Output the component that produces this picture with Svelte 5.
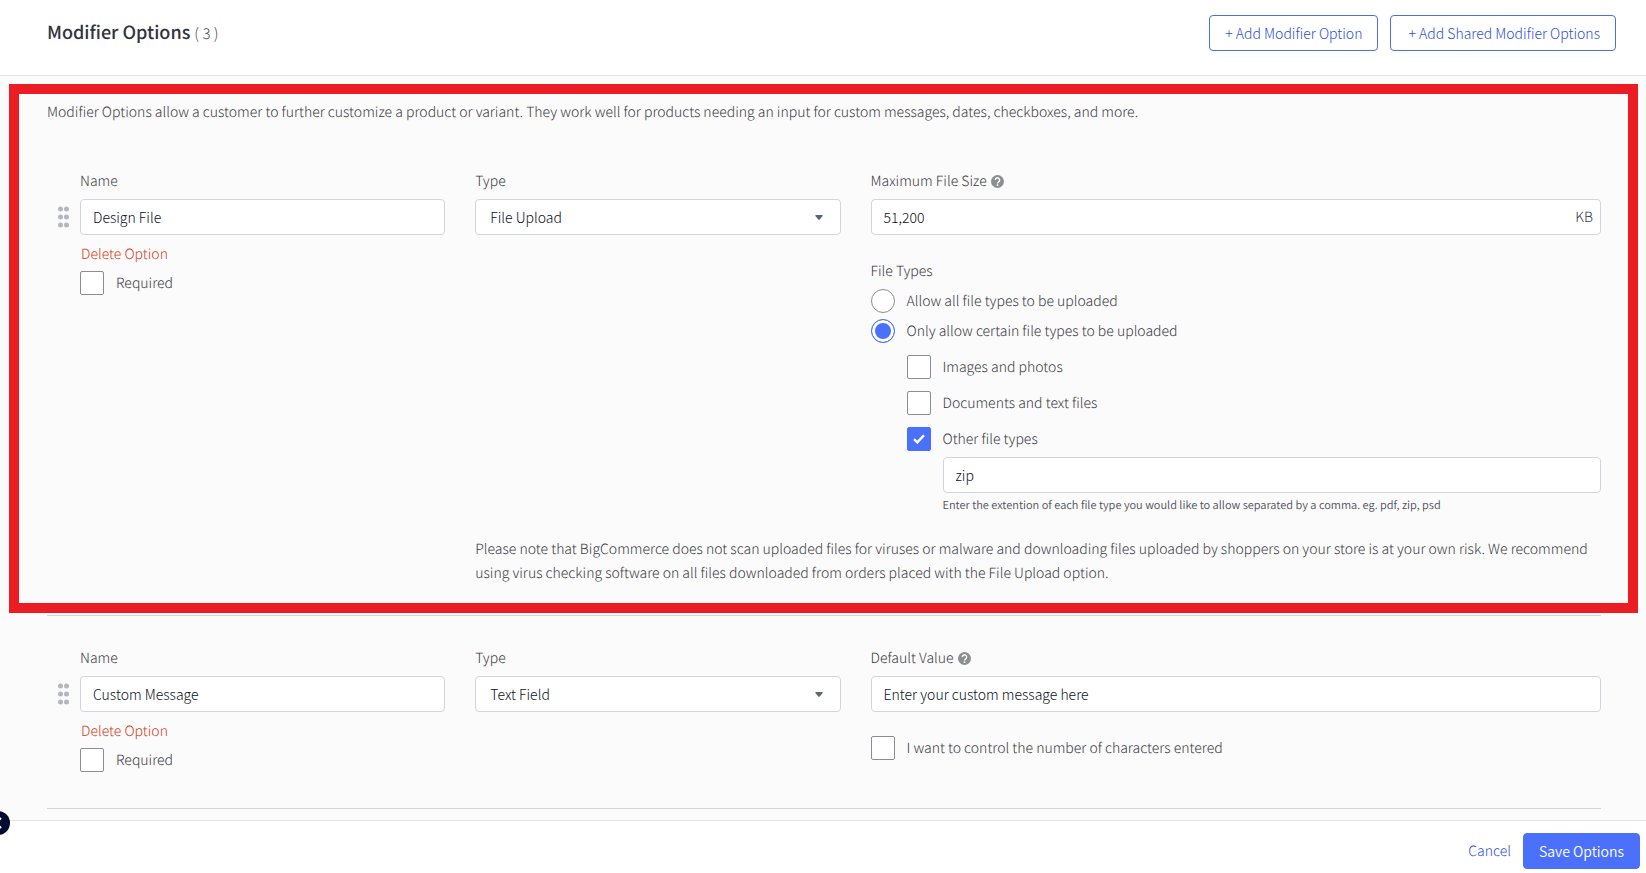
<script lang="ts">
    let count = 3;

    let uploadName = 'Design File';
    let uploadType = 'File Upload';
    let uploadRequired = false;
    let maxSize = '51,200';
    let allow = 'certain';
    let images = false;
    let documents = false;
    let other = true;
    let extensions = 'zip';

    let textName = 'Custom Message';
    let textType = 'Text Field';
    let textRequired = false;
    let defaultValue = 'Enter your custom message here';
    let limitCharacters = false;

    const types = ['File Upload', 'Text Field', 'Date Field', 'Checkbox'];
    const dots = [3, 11, 19];
</script>

{#snippet handle()}
    <button type="button" class="handle" aria-label="Reorder option">
        <svg width="11" height="22" viewBox="0 0 11 22" fill="#b4b7c1">
            {#each dots as y}
                <circle cx="2.5" cy={y} r="2.5" />
                <circle cx="8.5" cy={y} r="2.5" />
            {/each}
        </svg>
    </button>
{/snippet}

{#snippet help()}
    <svg class="help" width="13" height="13" viewBox="0 0 24 24" aria-hidden="true">
        <circle cx="12" cy="12" r="12" fill="#8c8f8f" />
        <path
            d="M8 9.200a4 4 0 1 1 6.400 3.200c-1.500 1.100-2.400 1.700-2.400 3.400"
            fill="none"
            stroke="#fff"
            stroke-width="2.600"
        />
        <rect x="10.500" y="17.300" width="3" height="3" fill="#fff" />
    </svg>
{/snippet}

{#snippet caret()}
    <svg class="caret" width="8" height="5" viewBox="0 0 8 5" fill="#5e637a" aria-hidden="true">
        <path d="M1 0h6q1.200 0 .6 1L4.700 4.600q-.7.700-1.400 0L.4 1Q-.2 0 1 0z" />
    </svg>
{/snippet}

<div class="page">
    <header>
        <h1>Modifier Options <span>( {count} )</span></h1>
        <div class="actions">
            <button type="button" class="button">+ Add Modifier Option</button>
            <button type="button" class="button shared">+ Add Shared Modifier Options</button>
        </div>
    </header>

    <main>
        <div class="highlighted">
            <p class="intro">
                Modifier Options allow a customer to further customize a product or variant. They
                work well for products needing an input for custom messages, dates, checkboxes, and
                more.
            </p>

            <section class="option">
                {@render handle()}
                <div class="fields">
                    <div class="field">
                        <label for="upload-name">Name</label>
                        <input type="text" id="upload-name" bind:value={uploadName} />
                        <a class="delete" href="#delete-upload">Delete Option</a>
                        <label class="check">
                            <input type="checkbox" bind:checked={uploadRequired} />
                            Required
                        </label>
                    </div>
                    <div class="field">
                        <label for="upload-type">Type</label>
                        <div class="select">
                            <select id="upload-type" bind:value={uploadType}>
                                {#each types as type}
                                    <option>{type}</option>
                                {/each}
                            </select>
                            {@render caret()}
                        </div>
                    </div>
                    <div class="field">
                        <label for="max-size">Maximum File Size {@render help()}</label>
                        <div class="suffixed">
                            <input type="text" id="max-size" bind:value={maxSize} />
                            <span>KB</span>
                        </div>

                        <fieldset>
                            <legend>File Types</legend>
                            <label class="check">
                                <input type="radio" name="allow" value="all" bind:group={allow} />
                                Allow all file types to be uploaded
                            </label>
                            <label class="check">
                                <input
                                    type="radio"
                                    name="allow"
                                    value="certain"
                                    bind:group={allow}
                                />
                                Only allow certain file types to be uploaded
                            </label>
                        </fieldset>

                        <div class="kinds">
                            <label class="check">
                                <input type="checkbox" bind:checked={images} />
                                Images and photos
                            </label>
                            <label class="check">
                                <input type="checkbox" bind:checked={documents} />
                                Documents and text files
                            </label>
                            <label class="check">
                                <span class="tick">
                                    <input type="checkbox" bind:checked={other} />
                                    {#if other}
                                        <svg width="12" height="10" viewBox="0 0 12 10" aria-hidden="true">
                                            <path
                                                d="M1 5.200l3.300 3.200L11 1.200"
                                                fill="none"
                                                stroke="#fff"
                                                stroke-width="2.400"
                                            />
                                        </svg>
                                    {/if}
                                </span>
                                Other file types
                            </label>
                        </div>
                        <div class="extensions">
                            <input
                                type="text"
                                aria-label="File extensions"
                                aria-describedby="extensions-hint"
                                bind:value={extensions}
                            />
                            <small id="extensions-hint">
                                Enter the extention of each file type you would like to allow
                                separated by a comma. eg. pdf, zip, psd
                            </small>
                        </div>
                    </div>
                    <p class="note">
                        Please note that BigCommerce does not scan uploaded files for viruses or
                        malware and downloading files uploaded by shoppers on your store is at your
                        own risk. We recommend using virus checking software on all files downloaded
                        from orders placed with the File Upload option.
                    </p>
                </div>
            </section>
        </div>

        <section class="option">
            {@render handle()}
            <div class="fields">
                <div class="field last">
                    <label for="text-name">Name</label>
                    <input type="text" id="text-name" bind:value={textName} />
                    <a class="delete" href="#delete-text">Delete Option</a>
                    <label class="check">
                        <input type="checkbox" bind:checked={textRequired} />
                        Required
                    </label>
                </div>
                <div class="field">
                    <label for="text-type">Type</label>
                    <div class="select">
                        <select id="text-type" bind:value={textType}>
                            {#each types as type}
                                <option>{type}</option>
                            {/each}
                        </select>
                        {@render caret()}
                    </div>
                </div>
                <div class="field">
                    <label for="default-value">Default Value {@render help()}</label>
                    <input type="text" id="default-value" bind:value={defaultValue} />
                    <label class="check limit">
                        <input type="checkbox" bind:checked={limitCharacters} />
                        I want to control the number of characters entered
                    </label>
                </div>
            </div>
        </section>
    </main>

    <footer>
        <a href="#cancel">Cancel</a>
        <button type="submit" class="button primary">Save Options</button>
    </footer>

    <button type="button" class="collapse" aria-label="Collapse menu">
        <svg width="24" height="24" viewBox="0 0 24 24" fill="none" stroke="#fff" stroke-width="2">
            <path d="M15 7l-5 5 5 5" />
        </svg>
    </button>
</div>

<style>
    :global(body) {
        margin: 0;
        background: #fbfbfb;
    }

    .page {
        display: flex;
        flex-direction: column;
        min-height: 100vh;
        font-family: 'Noto Sans CJK JP', 'Noto Sans CJK SC', 'Open Sans', sans-serif;
        font-size: 14px;
        font-weight: 300;
        line-height: 24px;
        text-rendering: geometricPrecision;
        color: #3c3c46;
    }

    .page * {
        box-sizing: border-box;
    }

    header {
        display: flex;
        justify-content: space-between;
        align-items: flex-start;
        padding: 15px 30px 24px 47px;
        background: #fff;
        border-bottom: 1px solid #e4e5e9;
    }

    h1 {
        margin: 0;
        font-size: 18px;
        font-weight: 500;
        line-height: 34px;
        color: #313440;
    }

    h1 span {
        font-size: 15px;
        font-weight: 300;
        line-height: 20px;
        color: #4c4c54;
    }

    .actions {
        display: flex;
        gap: 12px;
    }

    button {
        font: inherit;
        cursor: pointer;
    }

    .button {
        height: 36px;
        padding: 0 15px;
        line-height: 34px;
        color: #2d50d8;
        background: #fff;
        border: 1px solid #4b71d9;
        border-radius: 4px;
    }

    .shared {
        padding-left: 17px;
    }

    .primary {
        color: #fff;
        font-weight: 350;
        background: #4b71fc;
        border-color: #4b71fc;
    }

    main {
        flex: 1;
    }

    .highlighted {
        position: relative;
        padding-top: 24px;
    }

    .highlighted::after {
        content: '';
        position: absolute;
        inset: 8px 8px 3px 9px;
        border: 10px solid #ec1c24;
        pointer-events: none;
    }

    .intro {
        margin: 0 45px 15px 47px;
    }

    .option {
        display: flex;
        margin: 0 45px 0 47px;
        padding: 30px 0;
        border-bottom: 1px solid #d3d5dd;
    }

    .handle {
        display: flex;
        align-items: center;
        justify-content: center;
        width: 33px;
        height: 36px;
        margin-top: 30px;
        padding: 0;
        background: none;
        border: 0;
        cursor: grab;
    }

    .fields {
        flex: 1;
        display: grid;
        grid-template-columns: 1fr 1fr 2fr;
        column-gap: 30px;
    }

    .field {
        display: flex;
        flex-direction: column;
        min-width: 0;
    }

    .last {
        padding-bottom: 6px;
    }

    label {
        display: block;
        margin-bottom: 6px;
    }

    .help {
        margin-left: 1px;
        vertical-align: -2px;
    }

    input[type='text'],
    select {
        width: 100%;
        height: 36px;
        padding: 0 12px;
        font: inherit;
        color: #0c0f1c;
        background: #fff;
        border: 1px solid #d3d5dd;
        border-radius: 4px;
    }

    select {
        padding: 0 32px 0 14px;
        appearance: none;
    }

    .select,
    .suffixed {
        position: relative;
    }

    .caret {
        position: absolute;
        top: 16px;
        right: 18px;
        pointer-events: none;
    }

    .suffixed span {
        position: absolute;
        top: 6px;
        right: 8px;
    }

    a {
        color: #2d50d8;
        text-decoration: none;
    }

    .delete {
        align-self: flex-start;
        margin: 7px 0 5px 1px;
        color: #d04226;
    }

    .check {
        display: flex;
        align-items: center;
        gap: 12px;
        margin: 0;
    }

    .check input {
        flex: none;
        width: 24px;
        height: 24px;
        margin: 0;
        appearance: none;
        background: #fff;
        border: 1px solid #8c8c93;
        border-radius: 2px;
    }

    .check input[type='radio'] {
        border-radius: 50%;
    }

    .check input[type='radio']:checked {
        border-color: #4b71fc;
        background: #4b71fc;
        box-shadow: inset 0 0 0 3px #fff;
    }

    .check input[type='checkbox']:checked {
        border-color: #4b71fc;
        background: #4b71fc;
    }

    .tick {
        position: relative;
        display: flex;
    }

    .tick svg {
        position: absolute;
        top: 7px;
        left: 6px;
        pointer-events: none;
    }

    fieldset {
        display: flex;
        flex-direction: column;
        gap: 6px;
        margin: 24px 0 0;
        padding: 0;
        border: 0;
    }

    legend {
        margin-bottom: 6px;
        padding: 0;
    }

    .kinds {
        display: flex;
        flex-direction: column;
        gap: 12px;
        margin: 12px 0 6px 36px;
    }

    .extensions {
        margin-left: 72px;
    }

    small {
        display: block;
        margin-top: 2px;
        font-size: 11px;
        font-weight: 350;
        line-height: 20px;
        color: #50505a;
    }

    .note {
        grid-column: 2 / -1;
        margin: 22px 0 0;
    }

    .limit {
        margin-top: 24px;
    }

    footer {
        position: sticky;
        bottom: 0;
        display: flex;
        justify-content: flex-end;
        align-items: center;
        gap: 12px;
        padding: 12px 6px 4px;
        background: #fff;
        border-top: 1px solid #e4e5e9;
    }

    .collapse {
        position: fixed;
        bottom: 38px;
        left: -14px;
        width: 24px;
        height: 24px;
        padding: 0;
        line-height: 0;
        background: #020b30;
        border: 0;
        border-radius: 50%;
    }
</style>
